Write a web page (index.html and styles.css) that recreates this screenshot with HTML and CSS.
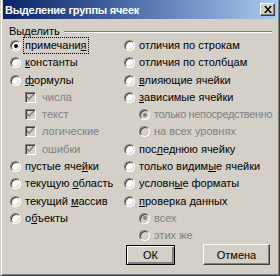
FILE: index.html
```html
<!DOCTYPE html>
<html lang="ru">
<head>
<meta charset="utf-8">
<title>Выделение группы ячеек</title>
<link rel="stylesheet" href="styles.css">
</head>
<body>
<div class="window">
  <div class="titlebar">
    <span class="title">Выделение группы ячеек</span>
    <button class="close" aria-label="Закрыть">
      <svg width="8" height="7" viewBox="0 0 8 7"><path d="M0 0h2l2 2.5L6 0h2L5 3.5 8 7H6L4 4.5 2 7H0l3-3.5z" fill="#000"/></svg>
    </button>
  </div>
  <div class="body">
    <div class="group-head"><span class="group-label">Выделить</span><span class="rule"></span></div>
    <div class="options">
      <div class="col col-left">
        <div class="opt"><span class="radio checked"></span><span class="lbl focus">примечани<u>я</u></span></div>
        <div class="opt"><span class="radio"></span><span class="lbl"><u>к</u>онстанты</span></div>
        <div class="opt"><span class="radio"></span><span class="lbl"><u>ф</u>ормулы</span></div>
        <div class="opt sub"><span class="check"><svg width="7" height="7" viewBox="0 0 7 7"><path d="M0 2l2 2 5-5v2L2 6 0 4z" fill="#808080"/></svg></span><span class="lbl dis">числа</span></div>
        <div class="opt sub"><span class="check"><svg width="7" height="7" viewBox="0 0 7 7"><path d="M0 2l2 2 5-5v2L2 6 0 4z" fill="#808080"/></svg></span><span class="lbl dis">текст</span></div>
        <div class="opt sub"><span class="check"><svg width="7" height="7" viewBox="0 0 7 7"><path d="M0 2l2 2 5-5v2L2 6 0 4z" fill="#808080"/></svg></span><span class="lbl dis">логические</span></div>
        <div class="opt sub"><span class="check"><svg width="7" height="7" viewBox="0 0 7 7"><path d="M0 2l2 2 5-5v2L2 6 0 4z" fill="#808080"/></svg></span><span class="lbl dis">ошибки</span></div>
        <div class="opt"><span class="radio"></span><span class="lbl">пустые яче<u>й</u>ки</span></div>
        <div class="opt"><span class="radio"></span><span class="lbl">текущую <u>о</u>бласть</span></div>
        <div class="opt"><span class="radio"></span><span class="lbl">текущий <u>м</u>ассив</span></div>
        <div class="opt"><span class="radio"></span><span class="lbl">о<u>б</u>ъекты</span></div>
      </div>
      <div class="col col-right">
        <div class="opt"><span class="radio"></span><span class="lbl">отличия по строкам</span></div>
        <div class="opt"><span class="radio"></span><span class="lbl">отличия по столбцам</span></div>
        <div class="opt"><span class="radio"></span><span class="lbl"><u>в</u>лияющие ячейки</span></div>
        <div class="opt"><span class="radio"></span><span class="lbl"><u>з</u>ависимые ячейки</span></div>
        <div class="opt sub2"><span class="radio disabled checked"></span><span class="lbl dis tight">только непосредственно</span></div>
        <div class="opt sub2"><span class="radio disabled"></span><span class="lbl dis">на всех уровнях</span></div>
        <div class="opt"><span class="radio"></span><span class="lbl">пос<u>л</u>еднюю ячейку</span></div>
        <div class="opt"><span class="radio"></span><span class="lbl">только видим<u>ы</u>е ячейки</span></div>
        <div class="opt"><span class="radio"></span><span class="lbl">условн<u>ы</u>е форматы</span></div>
        <div class="opt"><span class="radio"></span><span class="lbl"><u>п</u>роверка данных</span></div>
        <div class="opt sub2"><span class="radio disabled checked"></span><span class="lbl dis">всех</span></div>
        <div class="opt sub2"><span class="radio disabled"></span><span class="lbl dis">этих же</span></div>
      </div>
    </div>
    <div class="buttons">
      <button class="btn default">ОК</button>
      <button class="btn cancel">Отмена</button>
    </div>
  </div>
</div>
</body>
</html>
```
FILE: styles.css
```css
* { box-sizing: border-box; }
html, body { margin: 0; padding: 0; }
body {
  width: 280px;
  height: 276px;
  background: #d4d0c8;
  font-family: "Liberation Sans", Arial, sans-serif;
  font-size: 11px;
  color: #000;
  overflow: hidden;
}
.window {
  width: 280px;
  height: 276px;
  background: #d4d0c8;
  border-left: 1px solid #d4d0c8;
  border-right: 1px solid #404040;
  border-bottom: 1px solid #404040;
  box-shadow: inset 1px 0 #fff, inset -1px -1px #808080;
  padding: 0 2px 2px 2px;
  display: flex;
  flex-direction: column;
}
.titlebar {
  height: 19px;
  flex: none;
  background: linear-gradient(to right, #0a246a 0%, #3a5a98 35%, #a6caf0 100%);
  display: flex;
  align-items: center;
  justify-content: space-between;
  padding: 0 2px 0 2px;
}
.title {
  color: #fff;
  font-weight: bold;
  font-size: 11px;
  letter-spacing: -0.25px;
  white-space: nowrap;
}
.close {
  width: 15px;
  height: 13px;
  padding: 0;
  margin: 0;
  background: #d4d0c8;
  border: 1px solid;
  border-color: #fff #404040 #404040 #fff;
  box-shadow: inset -1px -1px #808080;
  display: flex;
  align-items: center;
  justify-content: center;
}
.close svg { display: block; margin-top: -1px; }
.body {
  flex: 1;
  padding: 7px 5px 0 6px;
  display: flex;
  flex-direction: column;
}
.group-head {
  height: 11px;
  display: flex;
  align-items: center;
  gap: 4px;
  line-height: 11px;
}
.group-label { white-space: nowrap; }
.rule {
  flex: 1;
  height: 2px;
  border-top: 1px solid #808080;
  border-bottom: 1px solid #fff;
  margin-top: 1px;
}
.options {
  display: grid;
  grid-template-columns: 114px 1fr;
}
.col { display: flex; flex-direction: column; min-width: 0; }
.opt {
  height: 17.27px;
  display: flex;
  align-items: center;
  gap: 2px;
  white-space: nowrap;
  padding-left: 1px;
}
.opt.sub { padding-left: 16px; gap: 4px; }
.opt.sub2 { padding-left: 16px; gap: 2px; }
.lbl {
  padding: 1px 1px;
  line-height: 13px;
  border: 1px solid transparent;
}
.lbl.tight { letter-spacing: -0.35px; }
.lbl.focus { border: 1px dotted #000; }
.lbl.dis { color: #808080; }
.radio {
  width: 11px;
  height: 11px;
  flex: none;
  border-radius: 50%;
  border: 1px solid;
  border-color: #808080 #fff #fff #808080;
  background: #fff;
  box-shadow: inset 1px 1px #404040, inset -1px -1px #d4d0c8;
  display: flex;
  align-items: center;
  justify-content: center;
}
.radio.disabled { background: #d4d0c8; }
.radio.checked::after {
  content: "";
  width: 4px;
  height: 4px;
  border-radius: 50%;
  background: #000;
}
.radio.disabled.checked::after { background: #808080; }
.check {
  width: 11px;
  height: 11px;
  flex: none;
  border: 1px solid;
  border-color: #808080 #fff #fff #808080;
  background: #d4d0c8;
  box-shadow: inset 1px 1px #404040, inset -1px -1px #d4d0c8;
  display: flex;
  align-items: center;
  justify-content: center;
}
.check svg { display: block; }
.buttons {
  display: flex;
  justify-content: flex-end;
  align-items: flex-start;
  gap: 28px;
  padding-right: 2px;
  margin-top: 0;
}
.btn {
  height: 21px;
  margin: 0;
  padding: 0;
  font-family: "Liberation Sans", Arial, sans-serif;
  font-size: 11px;
  color: #000;
  background: #d4d0c8;
  border: 1px solid;
  border-color: #fff #404040 #404040 #fff;
  box-shadow: inset -1px -1px #808080;
}
.btn.default {
  width: 49px;
  border: 1px solid #000;
  box-shadow: inset 1px 1px #fff, inset -2px -2px #808080, inset -1px -1px #404040;
  margin-top: 1px;
  height: 20px;
}
.btn.cancel { width: 67px; }
```
